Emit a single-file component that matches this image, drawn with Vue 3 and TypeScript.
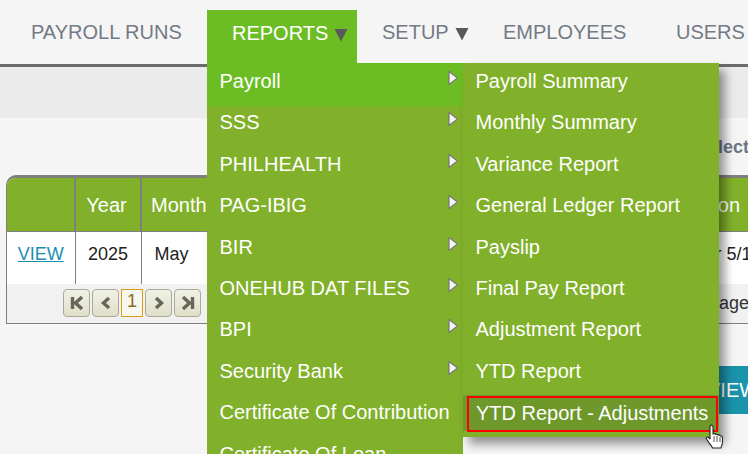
<script setup lang="ts">
const navItems = [
  { label: 'PAYROLL RUNS', cls: 'runs' },
  { label: 'REPORTS', cls: 'reports', caret: true },
  { label: 'SETUP', cls: 'setup', caret: true },
  { label: 'EMPLOYEES', cls: 'emp' },
  { label: 'USERS', cls: 'users' },
]
const mainMenu = [
  { label: 'Payroll', arrow: true, active: true },
  { label: 'SSS', arrow: true },
  { label: 'PHILHEALTH', arrow: true },
  { label: 'PAG-IBIG', arrow: true },
  { label: 'BIR', arrow: true },
  { label: 'ONEHUB DAT FILES', arrow: true },
  { label: 'BPI', arrow: true },
  { label: 'Security Bank', arrow: true },
  { label: 'Certificate Of Contribution' },
  { label: 'Certificate Of Loan' },
]
const subMenu = [
  'Payroll Summary',
  'Monthly Summary',
  'Variance Report',
  'General Ledger Report',
  'Payslip',
  'Final Pay Report',
  'Adjustment Report',
  'YTD Report',
]
</script>

<template>
  <div class="page">
    <nav class="nav">
      <a v-for="item in navItems" :key="item.label" class="nav-item" :class="item.cls">
        {{ item.label }}
        <svg v-if="item.caret" class="caret" width="14" height="14" viewBox="0 0 14 14">
          <polygon points="0.5,1 13.5,1 7,13.5" fill="#595959" />
        </svg>
      </a>
    </nav>
    <div class="band"></div>
    <div class="select-line">Select</div>

    <div class="grid-wrap">
      <table class="grid">
        <colgroup>
          <col class="c1" /><col class="c2" /><col class="c3" /><col class="c4" /><col class="c5" />
        </colgroup>
        <thead>
          <tr>
            <th></th><th class="year">Year</th><th class="left">Month</th><th></th><th class="desc">Description</th>
          </tr>
        </thead>
        <tbody>
          <tr>
            <td class="center"><a class="view">VIEW</a></td>
            <td class="center">2025</td>
            <td class="month">May</td>
            <td></td>
            <td class="desc-cell">Payroll for 5/1/2025</td>
          </tr>
        </tbody>
      </table>
      <div class="pager">
        <button class="pg"><svg width="16" height="16" viewBox="0 0 16 16"><path d="M3.500 2v12M13 2L6.500 8l6.500 6" fill="none" stroke="#66665a" stroke-width="3.400"/></svg></button>
        <button class="pg"><svg width="16" height="16" viewBox="0 0 16 16"><path d="M11 3L5.500 8l5.500 5" fill="none" stroke="#66665a" stroke-width="3.400"/></svg></button>
        <span class="pg-num">1</span>
        <button class="pg"><svg width="16" height="16" viewBox="0 0 16 16"><path d="M5 3l5.500 5L5 13" fill="none" stroke="#66665a" stroke-width="3.400"/></svg></button>
        <button class="pg"><svg width="16" height="16" viewBox="0 0 16 16"><path d="M12.500 2v12M3 2l6.500 6L3 14" fill="none" stroke="#66665a" stroke-width="3.400"/></svg></button>
        <span class="pg-info">Page 1 of 1</span>
      </div>
    </div>

    <div class="actions"><button class="new">VIEW</button></div>

    <ul class="menu main">
      <li v-for="m in mainMenu" :key="m.label" :class="{ active: m.active }">
        <span>{{ m.label }}</span>
        <svg v-if="m.arrow" class="arrow" width="10" height="14" viewBox="0 0 10 14">
          <polygon points="1,0.500 9.500,7 1,13.500" fill="#f6f6f2" stroke="#777" stroke-width="1.200" />
        </svg>
      </li>
    </ul>
    <ul class="menu sub">
      <li v-for="s in subMenu" :key="s">{{ s }}</li>
      <li class="hover"><span class="outline">YTD Report - Adjustments</span></li>
    </ul>

    <svg class="cursor" width="20" height="26" viewBox="0 0 20 26">
      <path d="M5.500 1.500c1.200-.8 2.500 0 2.500 1.300V10l1-.3c1-.2 1.700.2 1.900.8 1-.4 1.900-.1 2.200.7 1-.4 2-.1 2.300.8 1-.2 2 .4 2 1.500v5c0 2.500-1 3.500-1.500 5.500H7.500c-.6-2-2.200-3.500-3.500-5.200L1.500 15c-.8-1 .2-2.500 1.500-1.800L5 15V2.800c0-.5.100-1 .5-1.300z" fill="#fff" stroke="#222" stroke-width="1.100" stroke-linejoin="round"/>
      <path d="M9 12v6M12 12v6M15 13v5" stroke="#555" stroke-width="1" fill="none"/>
    </svg>
  </div>
</template>

<style>
html, body { margin: 0; background: #f5f5f5; }
</style>

<style scoped>
.page {
  position: relative;
  width: 748px;
  height: 454px;
  overflow: hidden;
  background: #f5f5f5;
  font-family: "Liberation Sans", Arial, sans-serif;
  color: #222;
}
.nav {
  display: flex;
  height: 64px;
  box-sizing: content-box;
  border-bottom: 3px solid #6b6b6b;
  white-space: nowrap;
}
.nav-item {
  display: flex;
  flex: none;
  align-items: center;
  height: 53px;
  margin-top: 10px;
  padding-bottom: 8px;
  box-sizing: border-box;
  font-size: 20px;
  color: #747a85;
}
.caret { margin-left: 6px; margin-top: 3px; flex: none; }
.runs { margin-left: 31px; width: 176px; }
.reports {
  width: 150px;
  padding-left: 25px;
  background: #6cbd24;
  color: #fff;
  height: 54px;
}
.setup { width: 146px; padding-left: 25px; }
.emp { width: 173px; }
.users { width: 80px; }
.band { height: 51px; background: #ebebeb; }
.select-line {
  height: 57px;
  padding-left: 696px;
  padding-top: 19px;
  box-sizing: border-box;
  font-size: 18px;
  font-weight: 700;
  line-height: 20px;
  color: #6c7686;
  white-space: nowrap;
}
.grid-wrap {
  width: 800px;
  margin-left: 6px;
  border: 1px solid #7f7f7f;
  border-top-width: 3px;
  border-top-left-radius: 10px;
  overflow: hidden;
  box-sizing: border-box;
  height: 149px;
}
.grid {
  border-collapse: collapse;
  table-layout: fixed;
  width: 762px;
  font-size: 18px;
}
.c1 { width: 68px; }
.c2 { width: 66px; }
.c3 { width: 120px; }
.c4 { width: 370px; }
.c5 { width: 138px; }
th {
  height: 53px;
  padding: 3px 0 0;
  box-sizing: border-box;
  background: #81b02a;
  color: #fff;
  font-weight: 400;
  font-size: 20px;
  border-right: 2px solid #7f7f7f;
  border-bottom: 1px solid #7f7f7f;
  text-align: center;
}
th.year { padding-right: 3px; }
th.left { text-align: left; padding-left: 9px; }
th.desc { text-align: left; padding-left: 8px; }
td {
  height: 52px;
  padding: 0;
  background: #fff;
  border-right: 1px solid #7f7f7f;
  vertical-align: top;
  line-height: 44px;
}
td.center { text-align: center; }
td.month { padding-left: 13px; }
td.desc-cell { padding-left: 9px; white-space: nowrap; }
.view { color: #1b8fb0; text-decoration: underline; }
.pager {
  display: flex;
  align-items: center;
  gap: 2px;
  height: 39px;
  background: #f1f1f1;
  padding-left: 56px;
  font-size: 18px;
}
.pg {
  flex: none;
  width: 27px;
  height: 28px;
  padding: 0;
  display: flex;
  align-items: center;
  justify-content: center;
  border: 1px solid #a9a998;
  border-radius: 4px;
  background: linear-gradient(#f1f1e4, #dfdfc9);
}
.pg-num {
  flex: none;
  width: 22px;
  height: 28px;
  box-sizing: border-box;
  border: 1px solid #d89e10;
  background: #f7f7f0;
  color: #8a6d1a;
  text-align: center;
  line-height: 23px;
}
.pg-info { margin-left: 504px; white-space: nowrap; color: #333; }
.actions {
  display: flex;
  justify-content: flex-end;
  margin-top: 42px;
}
.new {
  width: 55px;
  height: 48px;
  border: 0;
  padding: 0 0 0 14px;
  background: #1a93ab;
  color: #fff;
  font: 400 20px "Liberation Sans", Arial, sans-serif;
  text-align: left;
  white-space: nowrap;
  overflow: hidden;
}
.menu {
  position: absolute;
  top: 63px;
  margin: 0;
  padding: 0;
  list-style: none;
  width: 256px;
  background: #81b02a;
  color: #fff;
  font-size: 20px;
}
.menu li {
  position: relative;
  height: 41.4px;
  line-height: 37px;
  box-sizing: border-box;
  padding-left: 12.5px;
  white-space: nowrap;
}
.main { left: 207px; }
.main .active { background: #6cbd24; height: 42.5px; margin-bottom: -1.100px; }
.arrow { position: absolute; left: 241px; top: 8px; }
.sub {
  left: 463px;
  padding-bottom: 6px;
  box-shadow: 6px 7px 9px rgba(0, 0, 0, 0.4);
}
.sub li.hover { padding: 0; background: #6e982a; height: 36px; margin-top: 0.8px; }
.outline {
  display: block;
  box-sizing: border-box;
  width: 251px;
  height: 36px;
  margin-left: 4px;
  position: relative;
  top: 1px;
  border: 2px solid #f00;
  padding-left: 7px;
  line-height: 30px;
}
.cursor { position: absolute; left: 705px; top: 424px; }
</style>
